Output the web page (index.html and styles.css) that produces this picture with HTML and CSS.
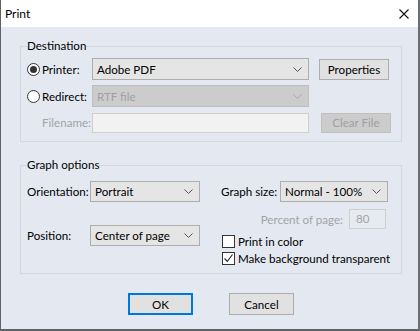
FILE: index.html
```html
<!doctype html>
<html lang="en">
<head>
  <meta charset="utf-8">
  <link rel="stylesheet" href="styles.css">
  <title>Print</title>
</head>
<body>
  <div class="window">
    <div class="titlebar">
      <span class="title">Print</span>
      <svg class="close" viewBox="0 0 10 10"><path d="M0.5 0.5 L9.5 9.5 M9.5 0.5 L0.5 9.5" stroke="#111" stroke-width="1.1" fill="none"/></svg>
    </div>
    <div class="content">
      <fieldset class="group dest">
        <legend>Destination</legend>
        <div class="dest-grid">
          <label class="opt"><span class="radio checked"></span>Printer:</label>
          <div class="combo"><span>Adobe PDF</span><svg class="chev" viewBox="0 0 9 5"><path d="M0.5 0.5 L4.5 4.5 L8.5 0.5" fill="none"/></svg></div>
          <button class="btn">Properties</button>

          <label class="opt"><span class="radio"></span>Redirect:</label>
          <div class="combo disabled"><span>RTF file</span><svg class="chev" viewBox="0 0 9 5"><path d="M0.5 0.5 L4.5 4.5 L8.5 0.5" fill="none"/></svg></div>
          <span></span>

          <span class="field-label dim">Filename:</span>
          <div class="textbox disabled"></div>
          <button class="btn disabled clear">Clear File</button>
        </div>
      </fieldset>

      <fieldset class="group graph">
        <legend>Graph options</legend>
        <div class="graph-cols">
          <div class="col-left">
            <div class="row">
              <span class="lbl lbl-left">Orientation:</span>
              <div class="combo combo-left"><span>Portrait</span><svg class="chev" viewBox="0 0 9 5"><path d="M0.5 0.5 L4.5 4.5 L8.5 0.5" fill="none"/></svg></div>
            </div>
            <div class="row row-pos">
              <span class="lbl lbl-left">Position:</span>
              <div class="combo combo-left"><span>Center of page</span><svg class="chev" viewBox="0 0 9 5"><path d="M0.5 0.5 L4.5 4.5 L8.5 0.5" fill="none"/></svg></div>
            </div>
          </div>
          <div class="col-right">
            <div class="row">
              <span class="lbl lbl-right">Graph size:</span>
              <div class="combo combo-right"><span>Normal - 100%</span><svg class="chev" viewBox="0 0 9 5"><path d="M0.5 0.5 L4.5 4.5 L8.5 0.5" fill="none"/></svg></div>
            </div>
            <div class="row row-percent">
              <span class="dim">Percent of page:</span>
              <div class="textbox small">80</div>
            </div>
            <label class="check"><span class="box"></span>Print in color</label>
            <label class="check"><span class="box"><svg viewBox="0 0 11 11"><path d="M1.5 5.5 L4.3 8.5 L9.5 1.5" fill="none" stroke="#222" stroke-width="1.1"/></svg></span>Make background transparent</label>
          </div>
        </div>
      </fieldset>

      <div class="actions">
        <button class="btn btn-action default">OK</button>
        <button class="btn btn-action">Cancel</button>
      </div>
    </div>
  </div>
</body>
</html>
```

FILE: styles.css
```css
* {
  box-sizing: border-box;
}

body {
  margin: 0;
  font-family: Lato, "Noto Sans", sans-serif;
  font-size: 11.6px;
  color: #000;
  background: #fff;
}

.window {
  width: 420px;
  height: 331px;
  display: flex;
  flex-direction: column;
  border-left: 1px solid #5f6368;
  border-right: 2px solid #6b6f75;
  border-bottom: 2px solid #5f6368;
}

.titlebar {
  height: 27px;
  flex: none;
  display: flex;
  align-items: center;
  justify-content: space-between;
  padding: 0 9px 0 4px;
  background: #fff;
}

.title {
  font-size: 12px;
}

.close {
  width: 10px;
  height: 10px;
}

.content {
  flex: 1;
  background: #e4e9f1;
  padding: 11px 16px 0 19px;
}

.group {
  margin: 0;
  padding: 0 10px 0 6px;
  border: 1px solid #d2d8e0;
}

.group legend {
  padding: 0;
  line-height: 16px;
}

/* destination */

.dest {
  padding-bottom: 9px;
}

.dest-grid {
  display: grid;
  grid-template-columns: 65px 217px auto;
  grid-template-rows: 22px 22px 20px;
  row-gap: 5px;
  align-items: center;
  padding-top: 4px;
}

.dest-grid .combo {
  height: 22px;
}

.dest-grid .textbox {
  height: 20px;
  margin-top: 1px;
}

.dest-grid .btn {
  width: 70px;
  margin-left: 10px;
}

.opt {
  display: flex;
  align-items: center;
  gap: 2px;
  white-space: nowrap;
}

.radio {
  width: 13px;
  height: 13px;
  border: 1px solid #333;
  border-radius: 50%;
  background: #fff;
  display: flex;
  align-items: center;
  justify-content: center;
}

.radio.checked::after {
  content: "";
  width: 7px;
  height: 7px;
  border-radius: 50%;
  background: #333;
}

.field-label {
  text-align: right;
  padding-right: 1px;
}

.dim {
  color: #a3a3a3;
}

.combo {
  display: flex;
  align-items: center;
  justify-content: space-between;
  height: 21px;
  padding: 0 6px 0 4px;
  background: #e5e5e5;
  border: 1px solid #adadad;
  white-space: nowrap;
}

.combo .chev {
  width: 9px;
  height: 5px;
  stroke: #555;
  stroke-width: 1;
}

.combo.disabled {
  background: #cccccc;
  border-color: #bfbfbf;
  color: #a0a0a0;
}

.combo.disabled .chev {
  stroke: #a8a8a8;
}

.textbox {
  background: #f2f2f2;
  border: 1px solid #cfcfcf;
}

.textbox.small {
  width: 37px;
  height: 20px;
  padding-left: 6px;
  line-height: 18px;
  color: #a3a3a3;
  background: #e6ebf2;
}

.btn {
  font-family: inherit;
  font-size: 11.6px;
  color: #000;
  background: #e1e1e1;
  border: 1px solid #adadad;
  border-radius: 0;
  height: 21px;
  padding: 0;
  margin: 0;
}

.btn.disabled {
  background: #cccccc;
  border-color: #bfbfbf;
  color: #a0a0a0;
  height: 20px;
}

.dest-grid .btn.clear {
  margin-left: 12px;
  margin-top: 1px;
}

/* graph options */

.graph {
  margin-top: 15px;
  padding-bottom: 6px;
}

.graph-cols {
  display: flex;
  padding-top: 8px;
}

.row {
  display: flex;
  align-items: center;
  white-space: nowrap;
}

.col-left {
  width: 194px;
  flex: none;
}

.row-pos {
  margin-top: 23px;
}

.lbl-left {
  width: 63px;
}

.combo-left {
  width: 110px;
}

.lbl-right {
  width: 59px;
}

.combo-right {
  width: 108px;
}

.row-percent {
  justify-content: flex-end;
  gap: 6px;
  margin-top: 7px;
  width: 167px;
  padding-right: 2px;
}

.check {
  display: flex;
  align-items: center;
  gap: 3px;
  height: 17px;
  margin-left: 1px;
  white-space: nowrap;
}

.row-percent + .check {
  margin-top: 4px;
}

.box {
  width: 13px;
  height: 13px;
  border: 1px solid #333;
  background: #fff;
  display: flex;
}

.box svg {
  width: 11px;
  height: 11px;
}

/* buttons */

.actions {
  display: flex;
  justify-content: center;
  gap: 36px;
  margin-top: 19px;
}

.btn-action {
  width: 65px;
  height: 22px;
}

.btn.default {
  border: 2px solid #0078d7;
}
```
